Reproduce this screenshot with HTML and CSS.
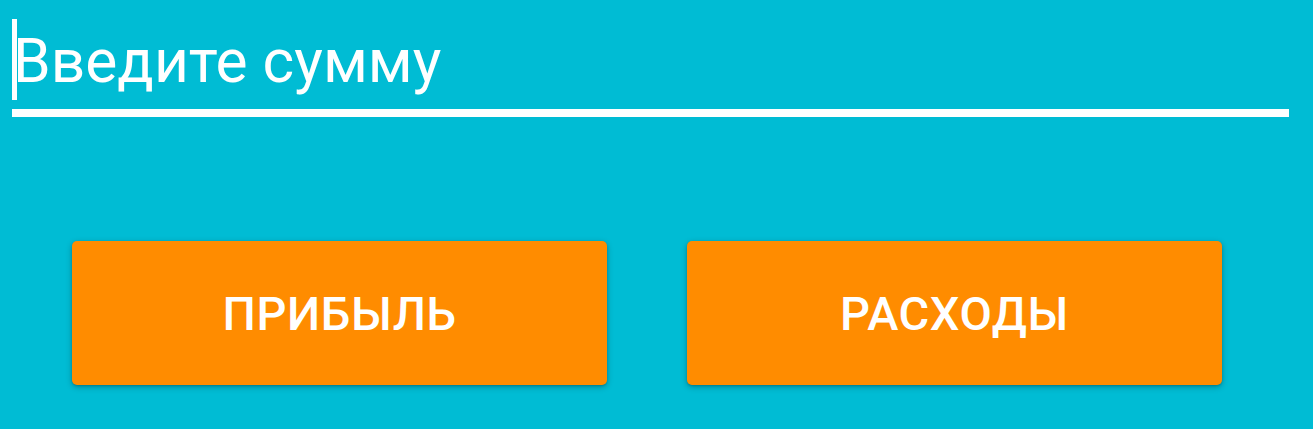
FILE: index.html
```html
<!DOCTYPE html>
<html lang="ru">
<head>
<meta charset="utf-8">
<link rel="stylesheet" href="styles.css">
</head>
<body>
<div class="screen">
  <div class="field">
    <span class="cursor"></span>
    <span class="placeholder">Введите сумму</span>
  </div>
  <div class="buttons">
    <div class="btn">ПРИБЫЛЬ</div>
    <div class="btn">РАСХОДЫ</div>
  </div>
</div>
</body>
</html>
```
FILE: styles.css
```css
html, body {
  margin: 0;
  padding: 0;
  background: #00bcd4;
}
.screen {
  width: 1313px;
  height: 429px;
  font-family: Roboto, "Noto Sans", sans-serif;
  color: #fff;
  overflow: hidden;
}
.field {
  margin: 19px 24px 0 12px;
  height: 90px;
  border-bottom: 8px solid #fff;
  display: flex;
  align-items: flex-start;
}
.cursor {
  width: 5px;
  height: 81px;
  background: #fff;
  flex: none;
}
.placeholder {
  font-size: 60.5px;
  line-height: 1;
  margin-top: 13px;
  margin-left: -4px;
}
.buttons {
  display: flex;
  gap: 80px;
  padding: 124px 0 0 72px;
}
.btn {
  width: 535px;
  height: 144px;
  background: #ff8c00;
  border-radius: 5px;
  box-shadow: 0 2px 6px rgba(0,0,0,0.28), 0 1px 2px rgba(0,0,0,0.15);
  display: flex;
  align-items: center;
  justify-content: center;
  font-size: 47px;
  font-weight: 500;
  letter-spacing: 0.6px;
}
```
